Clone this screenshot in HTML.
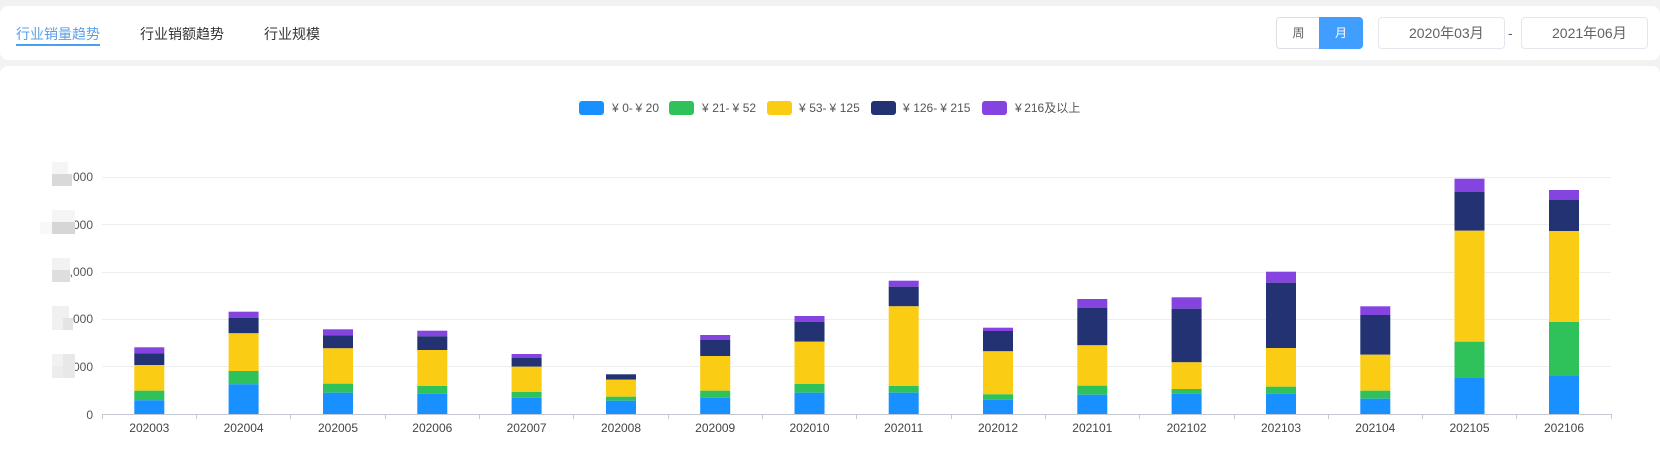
<!DOCTYPE html>
<html lang="zh-CN">
<head>
<meta charset="utf-8">
<title>行业销量趋势</title>
<style>
html,body{margin:0;padding:0;width:1660px;height:461px;overflow:hidden;background:#f2f2f2;font-family:"Liberation Sans","Noto Sans CJK SC",sans-serif;}
.card{position:absolute;left:0;width:1660px;background:#fff;border-radius:8px;}
#top{top:6px;height:54px;}
#main{top:66px;height:395px;border-radius:8px 8px 0 0;}
.tab{position:absolute;top:24px;font-size:14px;line-height:20px;color:#333;white-space:nowrap;}
.tab.on{color:#5a9fe8;}
#line{position:absolute;left:16px;top:44px;width:84px;height:2px;background:#4a9ff0;}
.btn{position:absolute;top:17px;height:32px;box-sizing:border-box;font-size:12px;line-height:30px;text-align:center;}
#wk{left:1276px;width:44px;border:1px solid #dcdfe6;border-right:0;border-radius:4px 0 0 4px;color:#606266;background:#fff;}
#mo{left:1319px;width:44px;background:#409eff;color:#fff;border-radius:0 4px 4px 0;line-height:32px;}
.date{position:absolute;top:17px;width:127px;height:32px;box-sizing:border-box;border:1px solid #e4e7ed;border-radius:4px;background:#fff;font-size:14px;line-height:30px;color:#606266;padding-left:30px;white-space:nowrap;}
#dash{position:absolute;left:1508px;top:23px;font-size:14px;line-height:20px;color:#606266;}
svg{position:absolute;left:0;top:0;}
</style>
</head>
<body>
<div class="card" id="top"></div>
<div class="card" id="main"></div>
<div class="tab on" style="left:16px">行业销量趋势</div>
<div id="line"></div>
<div class="tab" style="left:140px">行业销额趋势</div>
<div class="tab" style="left:264px">行业规模</div>
<div class="btn" id="wk">周</div>
<div class="btn" id="mo">月</div>
<div class="date" style="left:1378px">2020年03月</div>
<div id="dash">-</div>
<div class="date" style="left:1521px">2021年06月</div>

<svg width="1660" height="461" viewBox="0 0 1660 461" font-family="'Liberation Sans','Noto Sans CJK SC',sans-serif" font-size="12">
<!-- legend -->
<g>
<rect x="579" y="101" width="25" height="14" rx="3" fill="#1890ff"/>
<rect x="669" y="101" width="25" height="14" rx="3" fill="#2fc25b"/>
<rect x="767" y="101" width="25" height="14" rx="3" fill="#facc14"/>
<rect x="871" y="101" width="25" height="14" rx="3" fill="#223273"/>
<rect x="982" y="101" width="25" height="14" rx="3" fill="#8543e0"/>
</g>
<g fill="#555">
<text x="612" y="112">¥<tspan dx="3.5">0-</tspan><tspan dx="2.6">¥</tspan><tspan dx="3.5">20</tspan></text>
<text x="702" y="112">¥<tspan dx="3.5">21-</tspan><tspan dx="3">¥</tspan><tspan dx="3.5">52</tspan></text>
<text x="799" y="112">¥<tspan dx="3.5">53-</tspan><tspan dx="3">¥</tspan><tspan dx="3.5">125</tspan></text>
<text x="903" y="112">¥<tspan dx="3.5">126-</tspan><tspan dx="3">¥</tspan><tspan dx="3.5">215</tspan></text>
<text x="1015" y="112">¥<tspan dx="2.5">216及以上</tspan></text>
</g>
<!-- grid -->
<g fill="#eeeeee">
<rect x="102" y="177" width="1509" height="1"/>
<rect x="102" y="224" width="1509" height="1"/>
<rect x="102" y="272" width="1509" height="1"/>
<rect x="102" y="319" width="1509" height="1"/>
<rect x="102" y="366" width="1509" height="1"/>
</g>
<!-- y labels -->
<g fill="#555" text-anchor="end">
<text x="93" y="181">000</text>
<text x="93" y="229">000</text>
<text x="93" y="276">,000</text>
<text x="93" y="323">000</text>
<text x="93" y="371">000</text>
<text x="93" y="419">0</text>
</g>
<!-- mosaic -->
<g>
<rect x="52" y="162" width="16" height="12" fill="#f5f5f5"/>
<rect x="52" y="174" width="20" height="12" fill="#d9d9d9"/>
<rect x="52" y="210" width="23" height="12" fill="#f5f5f5"/>
<rect x="40" y="222" width="12" height="12" fill="#f8f8f8"/>
<rect x="52" y="222" width="23" height="12" fill="#d6d6d6"/>
<rect x="52" y="258" width="18" height="12" fill="#f2f2f2"/>
<rect x="52" y="270" width="18" height="12" fill="#dedede"/>
<rect x="52" y="306" width="17" height="12" fill="#f0f0f0"/>
<rect x="52" y="318" width="11" height="12" fill="#f0f0f0"/>
<rect x="63" y="318" width="10" height="12" fill="#e4e4e4"/>
<rect x="52" y="354" width="11" height="12" fill="#f2f2f2"/>
<rect x="52" y="366" width="11" height="12" fill="#ececec"/>
<rect x="63" y="354" width="12" height="24" fill="#e8e8e8"/>
</g>
<!-- bars -->
<g>
<g transform="translate(134.3 0)"><rect y="347.3" width="30" height="6" fill="#8543e0"/><rect y="353.3" width="30" height="11.7" fill="#223273"/><rect y="365" width="30" height="25.7" fill="#facc14"/><rect y="390.7" width="30" height="9.6" fill="#2fc25b"/><rect y="400.3" width="30" height="13.7" fill="#1890ff"/></g>
<g transform="translate(228.6 0)"><rect y="311.7" width="30" height="6" fill="#8543e0"/><rect y="317.7" width="30" height="15.6" fill="#223273"/><rect y="333.3" width="30" height="37.7" fill="#facc14"/><rect y="371" width="30" height="13.3" fill="#2fc25b"/><rect y="384.3" width="30" height="29.7" fill="#1890ff"/></g>
<g transform="translate(323 0)"><rect y="329.3" width="30" height="6" fill="#8543e0"/><rect y="335.3" width="30" height="13" fill="#223273"/><rect y="348.3" width="30" height="35.4" fill="#facc14"/><rect y="383.7" width="30" height="9" fill="#2fc25b"/><rect y="392.7" width="30" height="21.3" fill="#1890ff"/></g>
<g transform="translate(417.3 0)"><rect y="330.7" width="30" height="5.6" fill="#8543e0"/><rect y="336.3" width="30" height="13.7" fill="#223273"/><rect y="350" width="30" height="36" fill="#facc14"/><rect y="386" width="30" height="7.7" fill="#2fc25b"/><rect y="393.7" width="30" height="20.3" fill="#1890ff"/></g>
<g transform="translate(511.6 0)"><rect y="354" width="30" height="3.7" fill="#8543e0"/><rect y="357.7" width="30" height="9" fill="#223273"/><rect y="366.7" width="30" height="25.3" fill="#facc14"/><rect y="392" width="30" height="5.7" fill="#2fc25b"/><rect y="397.7" width="30" height="16.3" fill="#1890ff"/></g>
<g transform="translate(606 0)"><rect y="374.3" width="30" height="5.4" fill="#223273"/><rect y="379.7" width="30" height="17" fill="#facc14"/><rect y="396.7" width="30" height="4" fill="#2fc25b"/><rect y="400.7" width="30" height="13.3" fill="#1890ff"/></g>
<g transform="translate(700.2 0)"><rect y="335" width="30" height="4.7" fill="#8543e0"/><rect y="339.7" width="30" height="16.3" fill="#223273"/><rect y="356" width="30" height="34.7" fill="#facc14"/><rect y="390.7" width="30" height="7" fill="#2fc25b"/><rect y="397.7" width="30" height="16.3" fill="#1890ff"/></g>
<g transform="translate(794.5 0)"><rect y="316" width="30" height="5.7" fill="#8543e0"/><rect y="321.7" width="30" height="20" fill="#223273"/><rect y="341.7" width="30" height="42.3" fill="#facc14"/><rect y="384" width="30" height="8.7" fill="#2fc25b"/><rect y="392.7" width="30" height="21.3" fill="#1890ff"/></g>
<g transform="translate(888.7 0)"><rect y="280.7" width="30" height="6" fill="#8543e0"/><rect y="286.7" width="30" height="19.6" fill="#223273"/><rect y="306.3" width="30" height="79.7" fill="#facc14"/><rect y="386" width="30" height="6.7" fill="#2fc25b"/><rect y="392.7" width="30" height="21.3" fill="#1890ff"/></g>
<g transform="translate(983 0)"><rect y="327.7" width="30" height="3.3" fill="#8543e0"/><rect y="331" width="30" height="20.3" fill="#223273"/><rect y="351.3" width="30" height="43" fill="#facc14"/><rect y="394.3" width="30" height="5.4" fill="#2fc25b"/><rect y="399.7" width="30" height="14.3" fill="#1890ff"/></g>
<g transform="translate(1077.3 0)"><rect y="299" width="30" height="8.7" fill="#8543e0"/><rect y="307.7" width="30" height="37.6" fill="#223273"/><rect y="345.3" width="30" height="40.4" fill="#facc14"/><rect y="385.7" width="30" height="9" fill="#2fc25b"/><rect y="394.7" width="30" height="19.3" fill="#1890ff"/></g>
<g transform="translate(1171.6 0)"><rect y="297.3" width="30" height="11.4" fill="#8543e0"/><rect y="308.7" width="30" height="53.6" fill="#223273"/><rect y="362.3" width="30" height="26.7" fill="#facc14"/><rect y="389" width="30" height="4.7" fill="#2fc25b"/><rect y="393.7" width="30" height="20.3" fill="#1890ff"/></g>
<g transform="translate(1266 0)"><rect y="271.7" width="30" height="11" fill="#8543e0"/><rect y="282.7" width="30" height="65.3" fill="#223273"/><rect y="348" width="30" height="38.7" fill="#facc14"/><rect y="386.7" width="30" height="7" fill="#2fc25b"/><rect y="393.7" width="30" height="20.3" fill="#1890ff"/></g>
<g transform="translate(1360.3 0)"><rect y="306.3" width="30" height="8.7" fill="#8543e0"/><rect y="315" width="30" height="39.7" fill="#223273"/><rect y="354.7" width="30" height="36" fill="#facc14"/><rect y="390.7" width="30" height="8" fill="#2fc25b"/><rect y="398.7" width="30" height="15.3" fill="#1890ff"/></g>
<g transform="translate(1454.5 0)"><rect y="178.7" width="30" height="13" fill="#8543e0"/><rect y="191.7" width="30" height="39" fill="#223273"/><rect y="230.7" width="30" height="111" fill="#facc14"/><rect y="341.7" width="30" height="35.6" fill="#2fc25b"/><rect y="377.3" width="30" height="36.7" fill="#1890ff"/></g>
<g transform="translate(1549 0)"><rect y="190" width="30" height="10" fill="#8543e0"/><rect y="200" width="30" height="31" fill="#223273"/><rect y="231" width="30" height="91" fill="#facc14"/><rect y="322" width="30" height="54" fill="#2fc25b"/><rect y="376" width="30" height="38" fill="#1890ff"/></g>
</g>
<!-- x axis -->
<rect x="102" y="414" width="1509" height="1" fill="#c4c8d0"/>
<g fill="#c4c8d0">
<rect x="102" y="414" width="1" height="5"/><rect x="196" y="414" width="1" height="5"/><rect x="290" y="414" width="1" height="5"/><rect x="385" y="414" width="1" height="5"/><rect x="479" y="414" width="1" height="5"/><rect x="573" y="414" width="1" height="5"/><rect x="668" y="414" width="1" height="5"/><rect x="762" y="414" width="1" height="5"/><rect x="856" y="414" width="1" height="5"/><rect x="951" y="414" width="1" height="5"/><rect x="1045" y="414" width="1" height="5"/><rect x="1139" y="414" width="1" height="5"/><rect x="1234" y="414" width="1" height="5"/><rect x="1328" y="414" width="1" height="5"/><rect x="1422" y="414" width="1" height="5"/><rect x="1516" y="414" width="1" height="5"/><rect x="1611" y="414" width="1" height="5"/>
</g>
<g fill="#444" text-anchor="middle">
<text x="149.3" y="432">202003</text><text x="243.6" y="432">202004</text><text x="338" y="432">202005</text><text x="432.3" y="432">202006</text><text x="526.6" y="432">202007</text><text x="621" y="432">202008</text><text x="715.2" y="432">202009</text><text x="809.5" y="432">202010</text><text x="903.7" y="432">202011</text><text x="998" y="432">202012</text><text x="1092.3" y="432">202101</text><text x="1186.6" y="432">202102</text><text x="1281" y="432">202103</text><text x="1375.3" y="432">202104</text><text x="1469.5" y="432">202105</text><text x="1564" y="432">202106</text>
</g>
</svg>
</body>
</html>
